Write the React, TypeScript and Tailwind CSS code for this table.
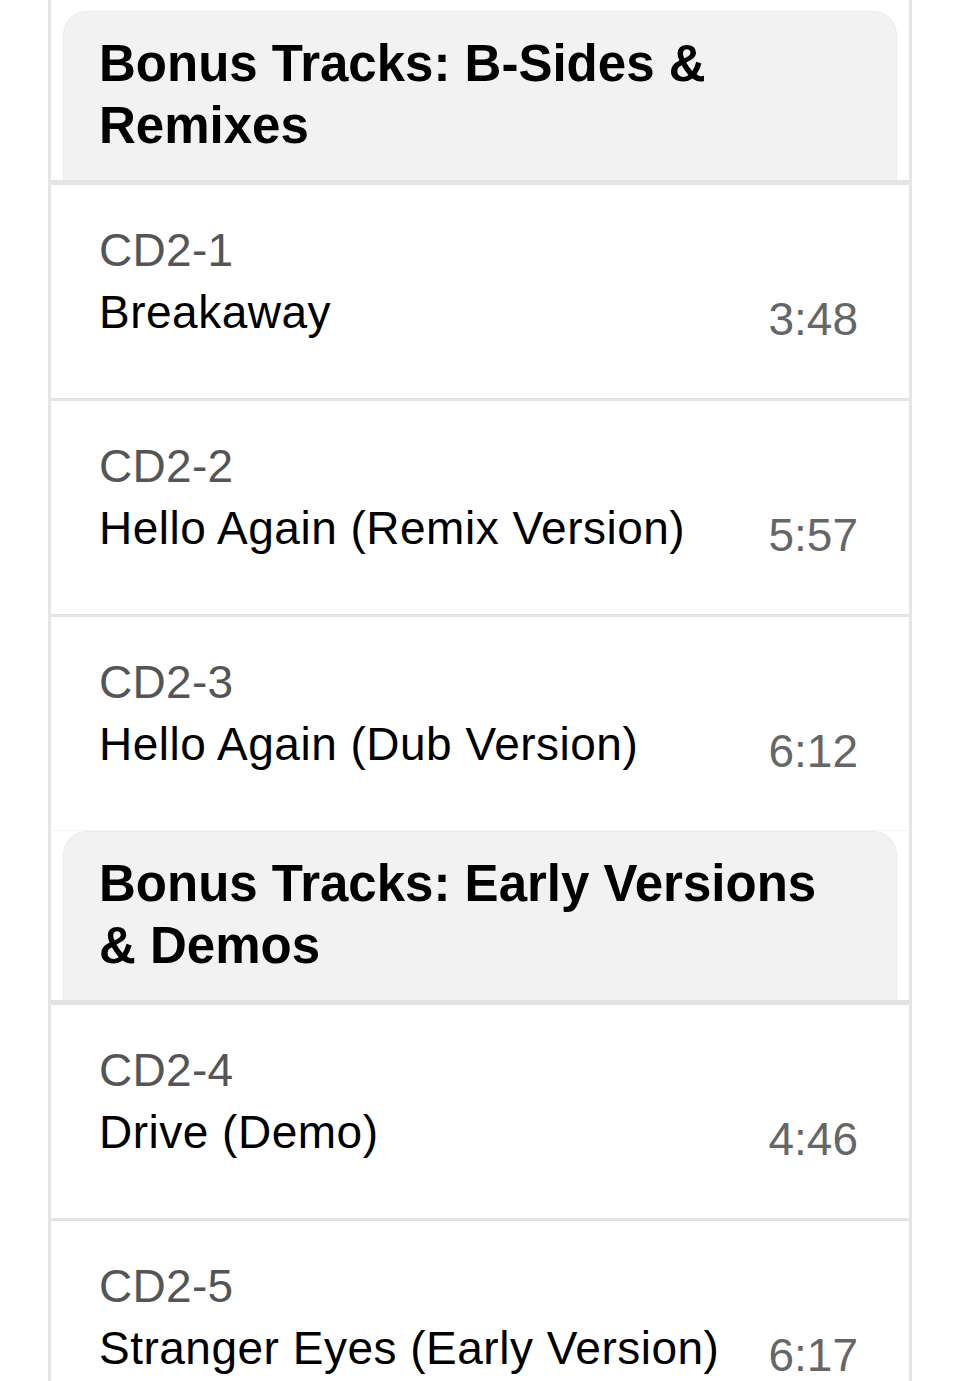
import React from 'react';

type Track = { no: string; title: string; time: string };
type Section = { title: string; tracks: Track[] };

const sections: Section[] = [
  {
    title: 'Bonus Tracks: B-Sides & Remixes',
    tracks: [
      { no: 'CD2-1', title: 'Breakaway', time: '3:48' },
      { no: 'CD2-2', title: 'Hello Again (Remix Version)', time: '5:57' },
      { no: 'CD2-3', title: 'Hello Again (Dub Version)', time: '6:12' },
    ],
  },
  {
    title: 'Bonus Tracks: Early Versions & Demos',
    tracks: [
      { no: 'CD2-4', title: 'Drive (Demo)', time: '4:46' },
      { no: 'CD2-5', title: 'Stranger Eyes (Early Version)', time: '6:17' },
    ],
  },
];

const TrackRow = ({ track, last }: { track: Track; last: boolean }) => (
  <div
    className={`flex items-end justify-between pl-[48px] pr-[51px] pt-[34px] pb-[55px] ${
      last ? 'border-b border-[#f4f4f4]' : 'border-b-[3px] border-[#e4e4e4]'
    }`}
  >
    <div className="min-w-0">
      <div className="text-[46px] leading-[62px] tracking-[0.3px] text-[#555555]">{track.no}</div>
      <div className="text-[46px] leading-[62px] tracking-[0.5px] text-black whitespace-nowrap">{track.title}</div>
    </div>
    <div className="text-[46px] leading-[48px] text-[#666666] shrink-0 ml-6">{track.time}</div>
  </div>
);

const App = () => {
  return (
    <div className="min-h-screen bg-white overflow-hidden" style={{ fontFamily: '"Liberation Sans", Arial, sans-serif' }}>
      <div className="ml-[48px] w-[864px] border-x-[3px] border-[#e5e5e5] pt-[11px]">
        {sections.map((section) => (
          <div key={section.title}>
            {/* Section header */}
            <div className="mx-[12px] rounded-t-[24px] bg-[#f2f2f2] border-t border-x border-[#ececec] pl-[35px] pr-[38px] pt-[21px] pb-[23px]">
              <h2 className="text-[51px] leading-[62px] font-bold text-black">{section.title}</h2>
            </div>
            <div className="h-[5px] bg-[#e3e3e3]" />
            {section.tracks.map((t, i) => (
              <TrackRow key={t.no} track={t} last={i === section.tracks.length - 1} />
            ))}
          </div>
        ))}
      </div>
    </div>
  );
};

export default App;
